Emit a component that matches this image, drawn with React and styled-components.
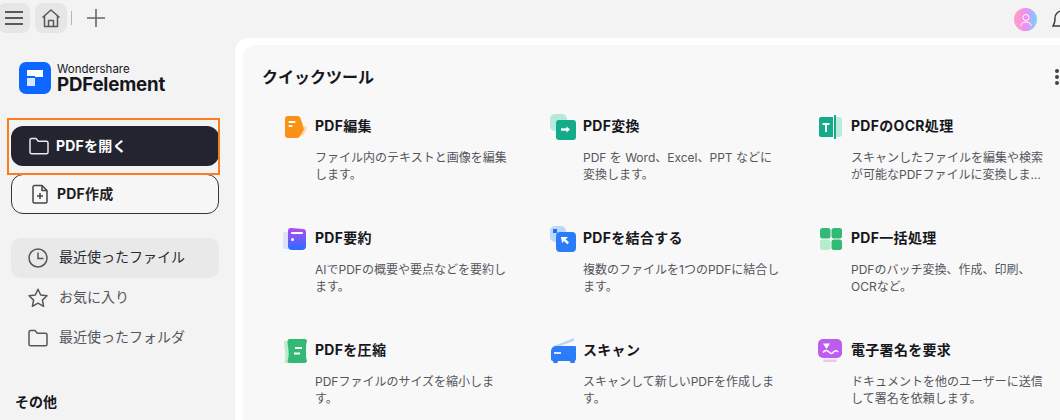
import React from 'react'
import styled, { createGlobalStyle } from 'styled-components'

const GlobalStyle = createGlobalStyle`
  html, body {
    margin: 0;
    padding: 0;
    background: #f3f3f3;
  }
  body {
    font-family: Inter, "Noto Sans CJK JP", sans-serif;
  }
`

const Page = styled.div`
  width: 1060px;
  height: 420px;
  overflow: hidden;
  display: flex;
  flex-direction: column;
  background: #f3f3f3;
`

const TopBar = styled.div`
  height: 38px;
  box-sizing: border-box;
  flex: none;
  display: flex;
  align-items: center;
  padding-bottom: 2px;
`

const TopButton = styled.div`
  width: 32px;
  height: 30px;
  margin-left: ${props => props.$ml || 0}px;
  border-radius: 8px;
  background: #e6e6e6;
  display: flex;
  align-items: center;
  justify-content: center;
`

const TopDivider = styled.div`
  width: 1px;
  height: 14px;
  background: #b5b5b5;
  margin-left: 4px;
`

const PlusButton = styled.div`
  margin-left: 15px;
  display: flex;
`

const TopRight = styled.div`
  margin: 3px -12px 0 auto;
  display: flex;
  align-items: center;
  gap: 15px;
`

const Avatar = styled.div`
  width: 23px;
  height: 23px;
  border-radius: 50%;
  background: linear-gradient(90deg, #ff9ec4 0%, #f58cf0 50%, #6fd4ff 100%);
  display: flex;
  align-items: center;
  justify-content: center;
`

const Body = styled.div`
  flex: 1;
  display: flex;
  min-height: 0;
`

const Sidebar = styled.aside`
  width: 235px;
  flex: none;
  box-sizing: border-box;
  padding: 24px 16px 0 11px;
  display: flex;
  flex-direction: column;
`

const Logo = styled.div`
  display: flex;
  align-items: center;
  gap: 6px;
  margin-left: 8px;
  height: 32px;
`

const LogoText = styled.div`
  display: flex;
  flex-direction: column;
  color: #16171c;
`

const LogoTop = styled.span`
  font-size: 11.5px;
  line-height: 13px;
`

const LogoMain = styled.span`
  font-size: 18.7px;
  line-height: 18px;
  font-weight: 700;
  letter-spacing: -0.2px;
`

const OpenWrap = styled.div`
  position: relative;
  margin-top: 32px;
`

const Highlight = styled.div`
  position: absolute;
  left: -4px;
  top: -8px;
  width: 213px;
  height: 57px;
  box-sizing: border-box;
  border: 2px solid #f97d21;
  pointer-events: none;
`

const ActionButton = styled.div`
  height: 40px;
  box-sizing: border-box;
  border-radius: 12px;
  display: flex;
  align-items: center;
  gap: 7px;
  padding-left: 18px;
  font-size: 14px;
  font-weight: 700;
  letter-spacing: 0.2px;
  background: ${props => props.$dark ? '#23242f' : '#f7f7f7'};
  color: ${props => props.$dark ? '#ffffff' : '#1d1e25'};
  border: ${props => props.$dark ? 'none' : '1px solid #33343c'};
  margin-top: ${props => props.$mt || 0}px;
`

const Nudged = styled.span`
  margin-bottom: ${props => props.$up}px;
`

const Nav = styled.nav`
  margin-top: 24px;
  display: flex;
  flex-direction: column;
`

const NavItem = styled.div`
  height: 40px;
  border-radius: 10px;
  display: flex;
  align-items: center;
  gap: 11px;
  padding-left: 17px;
  font-size: 14px;
  background: ${props => props.$active ? '#e9e9e9' : 'transparent'};
  color: ${props => props.$active ? '#2a2b31' : '#55565c'};
`

const SectionLabel = styled.div`
  margin: 34px 0 0 4px;
  font-size: 14px;
  font-weight: 700;
  line-height: 20px;
  color: #16171c;
`

const Main = styled.main`
  flex: 1;
  min-width: 0;
  background: #ffffff;
  border-top-left-radius: 14px;
  padding: 7px 0 0 8px;
`

const Panel = styled.div`
  height: 100%;
  background: #f8f8f8;
  border-top-left-radius: 12px;
  padding: 20px 0 0 19px;
  box-sizing: border-box;
`

const PanelHeader = styled.div`
  display: flex;
  align-items: center;
  justify-content: space-between;
  height: 22px;
  padding-right: 1px;
`

const PanelTitle = styled.h2`
  margin: 0;
  font-size: 16px;
  font-weight: 700;
  color: #16171c;
`

const MoreDots = styled.div`
  display: flex;
  flex-direction: column;
  gap: 2px;
  margin-top: 2px;
  span {
    width: 4px;
    height: 4px;
    border-radius: 50%;
    background: #44454b;
  }
`

const ToolGrid = styled.div`
  margin: 25px 0 0 21px;
  display: grid;
  grid-template-columns: repeat(3, 268px);
  grid-auto-rows: 112px;
`

const Tool = styled.div`
  display: grid;
  grid-template-columns: 24px 1fr;
  column-gap: 8px;
  align-content: start;
  align-items: center;
`

const IconBox = styled.div`
  width: 26px;
  height: 26px;
  margin: 2px 0 0 -1px;
`

const ToolTitle = styled.div`
  font-size: 14px;
  font-weight: 700;
  line-height: 26px;
  letter-spacing: 0.3px;
  color: #16171c;
  white-space: nowrap;
`

const ToolDesc = styled.div`
  grid-column: 2;
  width: 200px;
  margin-top: 9px;
  font-size: 12px;
  line-height: 17px;
  color: #55565c;
`

const Svg = ({ size = 26, children }) => (
  <svg width={size} height={size} viewBox={`0 0 ${size} ${size}`} fill="none">{children}</svg>
)

const FolderIcon = ({ color }) => (
  <svg width="20" height="20" viewBox="0 0 20 20" fill="none" stroke={color} strokeWidth="1.5" strokeLinejoin="round">
    <path d="M1 4.2c0-.9.7-1.6 1.6-1.6h4.6l2 2.6h8.2c.9 0 1.6.7 1.6 1.6v9.4c0 .9-.7 1.6-1.6 1.6H2.600c-.9 0-1.6-.7-1.6-1.6V4.200z" />
  </svg>
)

const icons = {
  edit: (
    <Svg>
      <path d="M19 18l3.500-6 2.500 1.500-3.500 7.500-3.500 1.500z" fill="#fdd6a4" />
      <path d="M3 5a3 3 0 0 1 3-3h9c2 0 3 .8 3.600 2.500l3 9c.4 1 .3 2-.2 3L18 22c-.8 1.400-2 2-3.400 2H6a3 3 0 0 1-3-3z" fill="#fb9218" />
      <rect x="6.500" y="7" width="7" height="2" rx="1" fill="#fff" />
      <rect x="6.500" y="11" width="4" height="2" rx="1" fill="#fff" />
    </Svg>
  ),
  convert: (
    <svg width="30" height="28" viewBox="0 0 30 28" fill="none">
      <rect x="0" y="0" width="17" height="17" rx="5" fill="#b5e9d9" />
      <rect x="6" y="6" width="20" height="20" rx="3" fill="#14ab8a" />
      <path d="M11 15.500h6.500" stroke="#fff" strokeWidth="2.400" />
      <path d="M16.500 12.500l3.500 3-3.500 3z" fill="#fff" />
    </svg>
  ),
  ocr: (
    <Svg>
      <path d="M18 3h3a3 3 0 0 1 3 3v14a3 3 0 0 1-3 3h-3z" fill="#bcebdd" />
      <path d="M3 3h12v20H3a2 2 0 0 1-2-2V5a2 2 0 0 1 2-2z" fill="#14ab8a" />
      <rect x="16" y="1" width="2" height="24" fill="#14ab8a" />
      <path d="M4.500 9h7v2H9v7H7v-7H4.500z" fill="#fff" />
    </Svg>
  ),
  summary: (
    <Svg>
      <rect x="1" y="6" width="10" height="17" rx="2" fill="#dde2fb" />
      <path d="M6 5a3 3 0 0 1 3.300-3l12 1a3 3 0 0 1 2.700 3v14a4 4 0 0 1-4 4H10a4 4 0 0 1-4-4z" fill="url(#sumGrad)" />
      <rect x="9" y="6" width="12" height="2" rx="1" fill="#fff" />
      <rect x="9" y="12" width="3" height="3" rx="1.500" fill="#fff" />
      <defs>
        <linearGradient id="sumGrad" x1="14" y1="2" x2="14" y2="24" gradientUnits="userSpaceOnUse">
          <stop stopColor="#b24cf2" />
          <stop offset="1" stopColor="#2a6cff" />
        </linearGradient>
      </defs>
    </Svg>
  ),
  merge: (
    <svg width="30" height="28" viewBox="0 0 30 28" fill="none">
      <rect x="0" y="0" width="16" height="16" rx="5" fill="#bcd7fd" />
      <rect x="3" y="3" width="4" height="4" fill="#1f6ff0" />
      <rect x="6" y="6" width="20" height="20" rx="4" fill="#2b7cf8" />
      <path d="M11 11h7l-2.300 2.300 3.300 3.300-1.700 1.700-3.300-3.300L12 17z" fill="#fff" />
    </svg>
  ),
  batch: (
    <Svg>
      <rect x="2" y="2" width="10.500" height="10.500" rx="2.500" fill="#34b876" />
      <rect x="13.500" y="2" width="10.500" height="10.500" rx="2.500" fill="#34b876" />
      <rect x="2" y="13.500" width="10.500" height="10.500" rx="2.500" fill="#b4edcd" />
      <rect x="13.500" y="13.500" width="10.500" height="10.500" rx="2.500" fill="#34b876" />
    </Svg>
  ),
  compress: (
    <Svg>
      <path d="M2 3h6v22H2c1.500-3 1.500-6 1-10.500S2 6 2 3z" fill="#bdeccd" />
      <path d="M5.500 3c0-1 1-2 2-2h15.500c1 0 2 1 2 2-1 3-1 6-1 11s0 6 1 8.500c0 1.500-1 2.500-2 2.500H7.500c-1 0-2-1-2-2 1-3 1.500-6 1-10.500S5.500 6 5.500 3z" fill="#34b876" />
      <rect x="13" y="9" width="7" height="2" fill="#fff" />
      <rect x="12" y="14.500" width="6" height="2" fill="#fff" />
    </Svg>
  ),
  scan: (
    <svg width="27" height="26" viewBox="0 0 27 26" fill="none">
      <path d="M4 8L24 0v3L10 8z" fill="#b9d6fb" />
      <path d="M1 13a5 5 0 0 1 5-5h19a1 1 0 0 1 1 1v12a2 2 0 0 1-2 2H3a2 2 0 0 1-2-2z" fill="#2b7cf8" />
      <rect x="3" y="22" width="5" height="3" rx="1.500" fill="#2b7cf8" />
      <rect x="20" y="22" width="5" height="3" rx="1.500" fill="#2b7cf8" />
      <rect x="4" y="14" width="7" height="2" fill="#d8e7fd" />
    </svg>
  ),
  sign: (
    <svg width="26" height="27" viewBox="0 0 26 27" fill="none">
      <rect x="0" y="1" width="24" height="19" rx="5" fill="#bf5cf0" />
      <rect x="5" y="21.500" width="14" height="2.500" rx="1.250" fill="#e6c8f8" />
      <path d="M5 5.500h7L8.500 11z" fill="#fff" />
      <path d="M5 14.500c2-2.500 4-2.500 6-.5s3 2 4.500 0 3.500-1.500 4.500 0" stroke="#fff" strokeWidth="1.600" />
    </svg>
  )
}

const tools = [
  { icon: 'edit', title: 'PDF編集', desc: 'ファイル内のテキストと画像を編集します。' },
  { icon: 'convert', title: 'PDF変換', desc: 'PDF を Word、Excel、PPT などに変換します。' },
  { icon: 'ocr', title: 'PDFのOCR処理', desc: 'スキャンしたファイルを編集や検索が可能なPDFファイルに変換しま…' },
  { icon: 'summary', title: 'PDF要約', desc: 'AIでPDFの概要や要点などを要約します。' },
  { icon: 'merge', title: 'PDFを結合する', desc: '複数のファイルを1つのPDFに結合します。' },
  { icon: 'batch', title: 'PDF一括処理', desc: 'PDFのバッチ変換、作成、印刷、OCRなど。' },
  { icon: 'compress', title: 'PDFを圧縮', desc: 'PDFファイルのサイズを縮小します。' },
  { icon: 'scan', title: 'スキャン', desc: 'スキャンして新しいPDFを作成します。' },
  { icon: 'sign', title: '電子署名を要求', desc: 'ドキュメントを他のユーザーに送信して署名を依頼します。' }
]

const App = () => (
  <Page>
    <GlobalStyle />
    <TopBar>
      <TopButton $ml={-2}>
        <svg width="18" height="14" viewBox="0 0 18 14" stroke="#5a5a5e" strokeWidth="1.800">
          <path d="M0 1h18M0 7h18M0 13h18" />
        </svg>
      </TopButton>
      <TopButton $ml={5}>
        <svg width="20" height="20" viewBox="0 0 20 20" fill="none" stroke="#55565a" strokeWidth="1.500" strokeLinejoin="round">
          <path d="M1.500 9.500L10 2l8.500 7.500M3.500 8V18.500h13V8" />
          <path d="M7.500 18.500v-6h5v6" />
        </svg>
      </TopButton>
      <TopDivider />
      <PlusButton>
        <svg width="18" height="18" viewBox="0 0 18 18" stroke="#66676b" strokeWidth="1.600">
          <path d="M9 0v18M0 9h18" />
        </svg>
      </PlusButton>
      <TopRight>
        <Avatar>
          <svg width="14" height="14" viewBox="0 0 14 14" fill="none" stroke="#fff" strokeWidth="1">
            <circle cx="7" cy="4.500" r="3" />
            <path d="M2 13c0-3 2-4 5-4s5 1 5 4" />
          </svg>
        </Avatar>
        <svg width="20" height="22" viewBox="0 0 20 22" fill="none" stroke="#3c3d42" strokeWidth="1.400">
          <path d="M1 17c1.500-2 2-3 2-8a7 7 0 0 1 14 0c0 5 .5 6 2 8z" />
        </svg>
      </TopRight>
    </TopBar>
    <Body>
      <Sidebar>
        <Logo>
          <svg width="32" height="32" viewBox="0 0 32 32">
            <rect width="32" height="32" rx="7" fill="#0c66ff" />
            <path d="M8 8h16v7H16v-1H8z" fill="#fff" />
            <path d="M8 16h8v8H8z" fill="#d9e8ff" />
          </svg>
          <LogoText>
            <LogoTop>Wondershare</LogoTop>
            <LogoMain>PDFelement</LogoMain>
          </LogoText>
        </Logo>
        <OpenWrap>
          <ActionButton $dark>
            <FolderIcon color="#e9e9ea" />
            <Nudged $up={2}>PDFを開く</Nudged>
          </ActionButton>
          <Highlight />
        </OpenWrap>
        <ActionButton $mt={8}>
          <svg width="20" height="20" viewBox="0 0 20 20" fill="none" stroke="#44454b" strokeWidth="1.500" strokeLinejoin="round">
            <path d="M3 3a1.500 1.500 0 0 1 1.500-1.500H12L17 6.500v11a1.500 1.500 0 0 1-1.500 1.500h-11A1.500 1.500 0 0 1 3 17.500z" />
            <path d="M12 1.500v5h5M10 9v6M7 12h6" />
          </svg>
          <Nudged $up={2}>PDF作成</Nudged>
        </ActionButton>
        <Nav>
          <NavItem $active>
            <svg width="20" height="20" viewBox="0 0 20 20" fill="none" stroke="#55565a" strokeWidth="1.500">
              <circle cx="10" cy="10" r="9" />
              <path d="M10 4.500V10.500H15.500" />
            </svg>
            <Nudged $up={4}>最近使ったファイル</Nudged>
          </NavItem>
          <NavItem>
            <svg width="20" height="20" viewBox="0 0 20 20" fill="none" stroke="#55565a" strokeWidth="1.500" strokeLinejoin="round">
              <path d="M10 1.200l2.700 5.800 6.300.8-4.600 4.300 1.200 6.200L10 15.200l-5.600 3.100 1.200-6.200L1 7.800 7.300 7z" />
            </svg>
            <Nudged $up={4}>お気に入り</Nudged>
          </NavItem>
          <NavItem>
            <FolderIcon color="#55565a" />
            <Nudged $up={4}>最近使ったフォルダ</Nudged>
          </NavItem>
        </Nav>
        <SectionLabel>その他</SectionLabel>
      </Sidebar>
      <Main>
        <Panel>
          <PanelHeader>
            <PanelTitle>クイックツール</PanelTitle>
            <MoreDots><span /><span /><span /></MoreDots>
          </PanelHeader>
          <ToolGrid>
            {tools.map(tool => (
              <Tool key={tool.title}>
                <IconBox>{icons[tool.icon]}</IconBox>
                <ToolTitle>{tool.title}</ToolTitle>
                <ToolDesc>{tool.desc}</ToolDesc>
              </Tool>
            ))}
          </ToolGrid>
        </Panel>
      </Main>
    </Body>
  </Page>
)

export default App
